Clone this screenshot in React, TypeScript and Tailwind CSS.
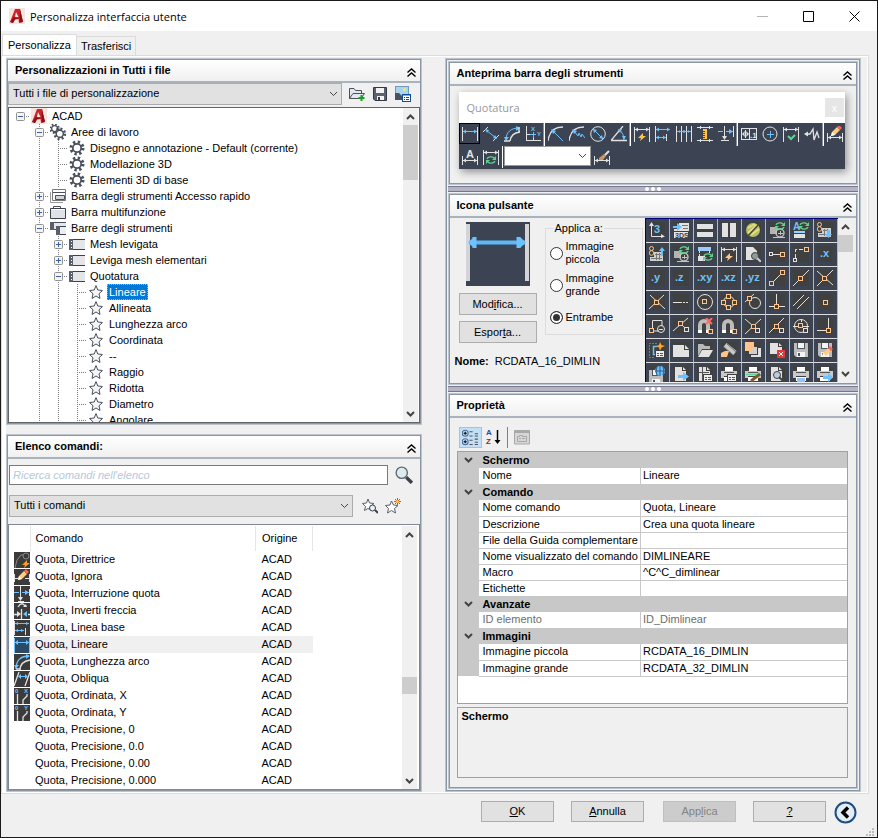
import { ReactNode, useState } from "react";

const W = "#e2e2e2";
const B = "#6cc2ff";
const O = "#ffc48c";
const G = "#5fd38d";
const D = "#3d4654";

/* ---------- drawing helpers, all on a 16x16 grid ---------- */

const Ico = ({ children, size = 16 }: { children: ReactNode; size?: number }) => (
  <svg
    width={size}
    height={size}
    viewBox="0 0 16 16"
    fill="none"
    className="block shrink-0"
    aria-hidden="true"
  >
    {children}
  </svg>
);

const L = ({ d, c = W, w = 1, dash }: { d: string; c?: string; w?: number; dash?: string }) => (
  <path d={d} stroke={c} strokeWidth={w} strokeDasharray={dash} />
);
const F = ({ d, c = W }: { d: string; c?: string }) => <path d={d} fill={c} />;
const C = ({ x, y, r, c = W, w = 1 }: { x: number; y: number; r: number; c?: string; w?: number }) => (
  <circle cx={x} cy={y} r={r} stroke={c} strokeWidth={w} />
);
const Sq = ({ x, y, c = O }: { x: number; y: number; c?: string }) => (
  <rect x={x - 1.5} y={y - 1.5} width="4" height="4" stroke={c} strokeWidth="1" fill="#404040" />
);
const T = ({ x, y, s = 11, c = B, children }: { x: number; y: number; s?: number; c?: string; children: string }) => (
  <text x={x} y={y} fontSize={s} fontWeight="bold" fill={c} fontFamily="Liberation Sans, sans-serif">
    {children}
  </text>
);
const Flash = ({ x, y, c = "#ffc552" }: { x: number; y: number; c?: string }) => (
  <F c={c} d={`M${x + 1} ${y - 4}L${x - 4} ${y + 1}H${x - 1}L${x - 2} ${y + 4}L${x + 4} ${y - 1}H${x + 1}Z`} />
);
const Refresh = ({ x, y }: { x: number; y: number }) => (
  <g transform={`translate(${x} ${y})`}>
    <L c={G} w={1.4} d="M-4 -1A4 3 0 0 1 3 -2M4 1A4 3 0 0 1 -3 2" />
    <F c={G} d="M5 -4V0H1ZM-5 4V0H-1Z" />
  </g>
);
const Pencil = ({ x, y }: { x: number; y: number }) => (
  <g transform={`translate(${x} ${y})`}>
    <F c="#ffcc80" d="M-4 1L1 -4L4 -1L-1 4L-5 5Z" />
    <F c="#ff6058" d="M1 -4L3 -6L6 -3L4 -1Z" />
    <F c="#fff" d="M-4 1L-5 5L-1 4Z" />
  </g>
);
const Page = () => <F d="M2 1H9V5H13V15H2ZM10 1L13 4H10Z" />;
const Disk = () => (
  <>
    <path d="M1 1H15V15H3L1 13Z" fill="#bdbdbd" />
    <F c="#4c5563" d="M4 1H12V7H4Z" />
    <F c="#f4f4f4" d="M5 1H11V6H5ZM4 10H12V15H4Z" />
    <F c="#4c5563" d="M5 11H7V14H5Z" />
  </>
);
const Printer = () => (
  <>
    <F c="#fff" d="M4 1H12V5H4ZM3 11H13V15H3Z" />
    <F c="#c8c8c8" d="M0 5H16V12H13V10H3V12H0Z" />
    <F c="#555" d="M3 6H13V7H3Z" />
  </>
);
const ListBadge = () => (
  <>
    <rect x="6.5" y="8.5" width="9" height="7" fill="#eee" stroke="#404040" />
    <L c="#555" d="M8 11.5H10M11 11.5H14M8 13.5H10M11 13.5H14" />
  </>
);
const DimFrame = () => (
  <>
    <L d="M0.5 1V16M15.5 1V16M1 3.5H15" />
    <F d="M1 3.5L4 1.5V5.5ZM15 3.5L12 1.5V5.5Z" />
  </>
);
const DimBase = () => (
  <>
    <L d="M0.5 7V16M15.5 7V16M1 11.5H15" />
    <F d="M1 11.5L4 9.5V13.5ZM15 11.5L12 9.5V13.5Z" />
  </>
);
const Magnet = () => (
  <>
    <L c="#bdbdbd" w={4} d="M3 12V7A4 4 0 0 1 11 7V12" />
    <F c="#fff" d="M1 12H5V15H1ZM9 12H13V15H9Z" />
  </>
);
const Db = () => (
  <>
    <F c="#d0d0d0" d="M5 6H14V15H1V11H5Z" />
    <L c="#777" d="M6 8.5H13M2 12.5H13M7.5 7V14M10.5 7V14" />
    <C x={2.5} y={2.5} r={2} c={O} />
    <C x={2.5} y={7} r={2.3} c={O} />
  </>
);
const Shapes = () => (
  <>
    <F c="#b4b4b4" d="M1 5H8V12H1Z" />
    <C x={11} y={11} r={4} c="#c4c4c4" w={1.4} />
    <L c="#c4c4c4" d="M4 15.5H16M11.5 9V13M9 11.5H14" />
  </>
);

const LinearDim = () => (
  <Ico>
    <L d="M0.5 1V15M15.5 1V15" />
    <L c={B} d="M1 5.5H15" />
    <F c={B} d="M1 5.5L4 3.5V7.5ZM15 5.5L12 3.5V7.5Z" />
  </Ico>
);

/* ---------- dimension toolbar ---------- */

type Tool = { name: string; icon: ReactNode };

const toolGroups: Tool[][] = [
  [
    { name: "Lineare", icon: <LinearDim /> },
    { name: "Allineata", icon: <Ico><L d="M0 6L5 1M10 15L16 9" /><L c={B} d="M3 4L13 12" /><F c={B} d="M2 3L6 4L4 7ZM14 13L10 12L12 9Z" /></Ico> },
    { name: "Lunghezza arco", icon: <Ico><L c={B} d="M2 14C2 6 7 2 15 2" /><F c={B} d="M0 11H5L2 15ZM12 0V5L16 2Z" /><L w={1.4} d="M6 15C7 9 10 7 16 6M0 15H6M15 1V6" /></Ico> },
    { name: "Coordinata", icon: <Ico><L d="M1.5 0V15M1 14.5H16M8.5 6V14M2 8.5H5" /><L c={B} d="M5 8.5H11M8.5 6V12" /><T x={6} y={5} s={6}>X</T><T x={12} y={10} s={6}>Y</T></Ico> },
  ],
  [
    { name: "Raggio", icon: <Ico><L d="M0 15C1 6 6 1 15 1" w={1.3} /><L c={B} d="M4 4L15 15" /><F c={B} d="M3 3L8 5L5 8Z" /></Ico> },
    { name: "Ridotta", icon: <Ico><L d="M0 15C1 6 6 1 15 1" w={1.3} /><L c={B} d="M5 5L9 10L10 7L12 11L13 8L16 12" /><F c={B} d="M3 3L8 5L5 8Z" /></Ico> },
    { name: "Diametro", icon: <Ico><C x={8} y={8} r={7.3} /><L c={B} d="M3 3L13 13" /><F c={B} d="M3 3L7 4L4 7ZM13 13L9 12L12 9Z" /></Ico> },
    { name: "Angolare", icon: <Ico><L d="M12 0L0 14.5H16" w={1.3} /><L c={B} d="M9 4Q13 8 13 14" /><F c={B} d="M7 3L11 3L9 7ZM11 10H15L13 14Z" /></Ico> },
  ],
  [
    { name: "Quota rapida", icon: <Ico><DimFrame /><Flash x={8} y={11} /></Ico> },
    { name: "Linea base", icon: <Ico><L d="M0.5 0V16M11.5 8V15" /><L c={B} d="M1 3.5H15M1 11.5H11" /><F c={B} d="M1 3.5L4 1.5V5.5ZM15 3.5L12 1.5V5.5ZM1 11.5L4 9.5V13.5ZM11 11.5L8 9.5V13.5Z" /></Ico> },
    { name: "Continua", icon: <Ico><L d="M0.5 0V16M5.5 0V16M10.5 0V16M15.5 0V16" /><L c={B} d="M1 5.5H15" /><F c={B} d="M3 4L5 5.5L3 7ZM8 4L6 5.5L8 7ZM8 4L10 5.5L8 7ZM13 4L11 5.5L13 7Z" /></Ico> },
    { name: "Spazio quota", icon: <Ico><L d="M0 1.5H16M0 14.5H16M3.5 0V3M12.5 0V3M3.5 13V16M12.5 13V16" /><F c="#ffc552" d="M6 3H10V13H6Z" /><L c={D} d="M6 5.5H8M6 7.5H8M6 9.5H8M6 11.5H8" /></Ico> },
    { name: "Interruzione quota", icon: <Ico><L d="M15.5 0V11M6.5 0V13M3 14.5H11" /><L c={B} d="M0 5.5H5M8 5.5H15" /><F c={B} d="M11 3L15 5.5L11 8Z" /><F d="M4 10H9L6.5 14Z" /></Ico> },
  ],
  [
    { name: "Tolleranza", icon: <Ico><rect x="0.5" y="2.5" width="15" height="11" stroke={W} /><L d="M8.5 3V13M1 8H8M4.5 4V12" /><C x={4.5} y={8} r={2.2} /><T x={9} y={12} s={8} c={W}>.1</T></Ico> },
    { name: "Centro", icon: <Ico><C x={8} y={8} r={7} /><L c={B} d="M8.5 5V12M5 8.5H12" /></Ico> },
    { name: "Ispezione", icon: <Ico><DimFrame /><L c={G} w={2} d="M5 10L8 13L12 9" /></Ico> },
    { name: "Lineare ridotta", icon: <Ico><L w={1.3} d="M1 8H6L9 3L10 14L13 6L15 12" /><F d="M0 8L4 5.5V10.5Z" /></Ico> },
  ],
  [{ name: "Modifica quota", icon: <Ico><DimBase /><Pencil x={9} y={5} /></Ico> }],
];

const ToolButton = ({ tool, active = false }: { tool: Tool; active?: boolean }) => (
  <button
    aria-label={tool.name}
    className={`flex size-[21px] shrink-0 items-start justify-start pt-[3px] pl-[3px] ${
      active ? "shadow-[inset_0_0_0_1px_#000]" : ""
    }`}
  >
    {tool.icon}
  </button>
);

/* ---------- icon palette ---------- */

const palette: ReactNode[] = [
  <><L d="M2.5 2V14.5H14" /><F d="M0 4H5L2.5 0ZM12 12V16L16 14.5Z" /><T x={5} y={11}>3</T></>,
  <><F d="M6 1H16V9H1V7H6Z" /><L c="#777" d="M9 3.5H15M10 6.5H15" /><F c={B} d="M0 4H4V1L9 5L4 9V6H0Z" /><F c="#e8e8e8" d="M1 10H15V16H1Z" /><T x={2} y={16} s={7} c="#404040">3DS</T></>,
  <><F d="M0 2H16V7H0ZM0 10H16V15H0Z" /></>,
  <><F d="M1 1H7V15H1ZM9 1H15V15H9Z" /></>,
  <><circle cx="8" cy="8" r="7" fill="#b9bd66" /><L c="#e5df83" w={2} d="M3 6L10 2M3 11L12 3M6 13L14 7" /><L c="#454a40" w={1.5} d="M2 15L15 1" /></>,
  <><Shapes /><Refresh x={11} y={4} /></>,
  <><T x={0} y={8} s={10}>A</T><Refresh x={11} y={4} /><F c="#9bd0ff" d="M1 9H12V11H1Z" /><F d="M1 12H12V16H1Z" /></>,
  <><Db /><F c={B} d="M10 8H13V12H15L11.5 16L8 12H10Z" /></>,
  <><Db /><F c={B} d="M12 10H14V5H16L13 1L10 5H12Z" /></>,
  <><Shapes /><Refresh x={11} y={4} /></>,
  <><F c="#9bcbff" d="M1 1H14V5H1Z" /><L dash="2 1" d="M2.5 5V10M12.5 5V8" /><F d="M1 10H8V15H1Z" /><Refresh x={11} y={11} /></>,
  <><DimFrame /><Flash x={8} y={11} c={O} /></>,
  <><F d="M1 1H8L12 5V14H1Z" /><circle cx="10" cy="10" r="3.5" fill="#8f9a9e" stroke="#404040" /><L w={2} c="#ccc" d="M12 12L16 16" /></>,
  <><L d="M2 8.5H12" /><rect x="0.5" y="6.5" width="3" height="3" stroke={W} fill="#404040" /><Sq x={13} y={8} /></>,
  <><L dash="4 2" d="M2.5 12V3.5H11" /><rect x="0.5" y="12.5" width="3" height="3" stroke={W} /><Sq x={13} y={3} /></>,
  <><T x={3} y={11}>.x</T></>,
  <><T x={2} y={11}>.y</T></>,
  <><T x={2} y={11}>.z</T></>,
  <><T x={0} y={11}>.xy</T></>,
  <><T x={0} y={11}>.xz</T></>,
  <><T x={0} y={11}>.yz</T></>,
  <><L d="M3 13L13 3" /><Sq x={2} y={13} /><Sq x={13} y={2} /></>,
  <><L d="M0 16L16 0" /><Sq x={7} y={8} /></>,
  <><L d="M0 16L16 0M0 1L16 15" /><Sq x={7} y={8} /></>,
  <><L d="M0 15L15 1M1 1L16 15" /><Sq x={7} y={8} /></>,
  <><L d="M0 8.5H7" /><L dash="2 1" d="M7 8.5H16" /></>,
  <><C x={8} y={8} r={7.5} /><Sq x={7} y={7} /></>,
  <><C x={8} y={8} r={5.5} /><Sq x={7} y={2} /><Sq x={7} y={13} /><Sq x={2} y={8} /><Sq x={13} y={8} /></>,
  <><C x={10} y={9} r={5.5} /><L d="M0 8L9 0" /><Sq x={4} y={4} /></>,
  <><L d="M7.5 0V11M0 12.5H16" /><Sq x={7} y={12} /></>,
  <><L d="M0 12L11 1M4 15L16 3" /></>,
  <><Sq x={8} y={8} /></>,
  <><L d="M3.5 12V2.5H13V8M5 13H10" /><C x={12} y={11} r={3.5} /><L d="M10 11.5H14" /><Sq x={2} y={12} /></>,
  <><L d="M0 13L8 6L15 0M9 7L12 10" /><Sq x={7} y={5} /><Sq x={13} y={11} c={W} /></>,
  <><Magnet /><L c="#ff6b6b" w={2} d="M9 0L15 6M15 0L9 6" /><Sq x={13} y={13} /></>,
  <><Magnet /><Sq x={13} y={13} /></>,
  <><L d="M0 1L14 13M0 16L16 1" /><Sq x={8} y={8} /><Sq x={12} y={12} c={W} /></>,
  <><L d="M0 15L15 0M9 9L12 12" /><Sq x={7} y={8} /><Sq x={12} y={12} c={W} /></>,
  <><C x={8} y={8} r={6.5} /><L d="M0 8.5H16M8.5 1V4" /><Sq x={7} y={7} /><Sq x={12} y={12} c={W} /></>,
  <><L d="M11.5 0V10M0 12.5H10" /><Sq x={11} y={12} /></>,
  <><L c="#e05050" dash="2 1" d="M8 1.5H0.5V15.5H6" /><L c={B} d="M8 4.5H4.5V12.5H7" w={1.5} /><F c="#ffa726" d="M11 0L12.5 3L16 4L12.5 5.5L11 9L10 5.5L7 4L10 3Z" /><ListBadge /></>,
  <><F d="M0 3H11V8H16V15H0ZM12 3L16 7H12Z" /></>,
  <><F c="#b8b8b8" d="M1 2H6L8 4H13V7H5L1 14Z" /><F d="M5 8H16L12 15H1Z" /></>,
  <><L c="#c8c8c8" w={5} d="M4 3L14 11" /><L w={1} c="#777" d="M6 2L15 10M3 5L12 13" /><F c={O} d="M0 11L4 9H8L6 15H0Z" /></>,
  <><F d="M6 6H16V15H6Z" /><F c="#404040" d="M3 4H13V13H3Z" /><F c="#d0d0d0" d="M4 5H12V12H4Z" /><F c={O} d="M0 0H9V6L6 9H0Z" /></>,
  <><F d="M1 1H9V5H13V12H1ZM10 1L13 4H10Z" /><F c="#e53935" d="M8 8H16V16H8Z" /><L c="#fff" d="M10 10L14 14M14 10L10 14" /></>,
  <Disk />,
  <><Disk /><Pencil x={10} y={10} /></>,
  <><g transform="translate(-1 3)"><Disk /></g><circle cx="11" cy="5" r="5" fill={B} /><L c="#2b5c86" d="M6 5H16M11 0V10M8 1Q6 5 8 9M14 1Q16 5 14 9" /></>,
  <><Page /><F c={B} d="M5 9H10V6L16 10.5L10 15V12H5Z" /></>,
  <><Page /><L c="#555" d="M2 6.5H12M5.5 1V15" /><ListBadge /></>,
  <><Printer /><ListBadge /></>,
  <><Printer /><L c="#7a5a30" w={3} d="M6 15L15 8" /><L c={G} d="M1 8.5H12" /></>,
  <><Page /><circle cx="8" cy="9" r="3.5" fill="#bcd" stroke="#404040" /><L c="#404040" w={2} d="M10 11L14 15" /></>,
  <><Printer /><F c="#8fc4ff" d="M4 12H12V16H4Z" /></>,
  <><Printer /><F c={B} d="M6 10H11V7L16 11.5L11 16V13H6Z" /></>,
];

/* ---------- tree ---------- */

type Guide = "none" | "line" | "tee" | "plus" | "minus";
type TreeIcon = "logo" | "gears" | "gear" | "quick" | "ribbon" | "bars" | "bar" | "star";
type TreeRow = { guides: Guide[]; icon: TreeIcon; label: string };

const sub: Guide[] = ["none", "line", "line", "tee"];
const treeRows: TreeRow[] = [
  { guides: ["minus"], icon: "logo", label: "ACAD" },
  { guides: ["none", "minus"], icon: "gears", label: "Aree di lavoro" },
  { guides: ["none", "line", "tee"], icon: "gear", label: "Disegno e annotazione - Default (corrente)" },
  { guides: ["none", "line", "tee"], icon: "gear", label: "Modellazione 3D" },
  { guides: ["none", "line", "tee"], icon: "gear", label: "Elementi 3D di base" },
  { guides: ["none", "plus"], icon: "quick", label: "Barra degli strumenti Accesso rapido" },
  { guides: ["none", "plus"], icon: "ribbon", label: "Barra multifunzione" },
  { guides: ["none", "minus"], icon: "bars", label: "Barre degli strumenti" },
  { guides: ["none", "line", "plus"], icon: "bar", label: "Mesh levigata" },
  { guides: ["none", "line", "plus"], icon: "bar", label: "Leviga mesh elementari" },
  { guides: ["none", "line", "minus"], icon: "bar", label: "Quotatura" },
  { guides: sub, icon: "star", label: "Lineare" },
  { guides: sub, icon: "star", label: "Allineata" },
  { guides: sub, icon: "star", label: "Lunghezza arco" },
  { guides: sub, icon: "star", label: "Coordinata" },
  { guides: sub, icon: "star", label: "--" },
  { guides: sub, icon: "star", label: "Raggio" },
  { guides: sub, icon: "star", label: "Ridotta" },
  { guides: sub, icon: "star", label: "Diametro" },
  { guides: sub, icon: "star", label: "Angolare" },
];

const GuideCell = ({ kind, first }: { kind: Guide; first: boolean }) => (
  <svg width="19" height="16" viewBox="0 0 19 16" fill="none" className="block shrink-0" aria-hidden="true">
    {kind !== "none" && !first && <path d="M9.5 0V16" stroke="#808080" strokeDasharray="1 1" />}
    {kind !== "none" && kind !== "line" && <path d="M9 8.5H19" stroke="#808080" strokeDasharray="1 1" />}
    {(kind === "plus" || kind === "minus") && (
      <>
        <rect x="5.5" y="4.5" width="8" height="8" rx="1" fill="#f4f4f4" stroke="#919191" />
        <path d={kind === "plus" ? "M7 8.5H12M9.5 6V11" : "M7 8.5H12"} stroke="#3b5fa8" />
      </>
    )}
  </svg>
);

const AcadLogo = () => (
  <Ico>
    <rect width="16" height="16" fill="#f6e4e0" />
    <path d="M6 1H11L14 14L10 15L9.5 11H6L4 15L1 14Z" fill="#c9252c" />
    <path d="M7 4L9.5 9H6Z" fill="#f6e4e0" />
    <path d="M1 14L5 9L10 11L6 11.5L4 15ZM11 1L14 14L10.5 14.5Z" fill="#8d1016" />
  </Ico>
);

const GearShape = () => (
  <>
    <circle cx="8" cy="8" r="6" stroke="#4a505c" strokeWidth="3" strokeDasharray="2.3 2.412" />
    <circle cx="8" cy="8" r="4.2" stroke="#4a505c" strokeWidth="1.8" fill="#fff" />
  </>
);
const starPath = "M8 1.5L9.8 6L14.5 6.5L11 9.8L12 14.5L8 12L4 14.5L5 9.8L1.5 6.5L6.2 6Z";

const treeIcons: Record<TreeIcon, ReactNode> = {
  logo: <AcadLogo />,
  gears: (
    <Ico>
      <g transform="translate(-1 -1) scale(0.7)"><GearShape /></g>
      <g transform="translate(3 3) scale(0.85)"><GearShape /></g>
    </Ico>
  ),
  gear: <Ico><GearShape /></Ico>,
  quick: (
    <Ico>
      <path d="M2.5 1.5H15.5V12.5H2.5Z" fill="#fff" stroke="#777" />
      <path d="M0.5 4V14.5H13" stroke="#999" />
      <path d="M3 4.5H15" stroke="#4a505c" />
      <path d="M5.5 7.5H14.5V11.5H5.5Z" fill="#d0d3d8" stroke="#4a505c" />
    </Ico>
  ),
  ribbon: (
    <Ico>
      <path d="M3.5 4.5V2.5H10.5V4.5" stroke="#4a505c" />
      <path d="M0.5 4.5H15.5V14.5H0.5Z" fill="#dfe2e6" stroke="#3c424d" />
      <path d="M1 5.5H15" stroke="#fff" />
    </Ico>
  ),
  bars: (
    <Ico>
      <path d="M0 2H16V10H0Z" fill="#e6e7ea" />
      <path d="M0 2.5H16M0 9.5H6" stroke="#4a505c" />
      <path d="M0 2H4V10H0Z" fill="#5a606b" />
      <path d="M6 6H16V15H6Z" fill="#eceef0" />
      <path d="M6 6.5H16M6 14.5H16" stroke="#3c424d" />
      <path d="M6 6H10V15H6Z" fill="#5a606b" />
    </Ico>
  ),
  bar: (
    <Ico>
      <path d="M1 3H16V13H1Z" fill="#e3e5e8" />
      <path d="M0 3.5H16M0 13.5H16" stroke="#3c424d" />
      <path d="M0 3H4V14H0Z" fill="#5a606b" />
      <path d="M2.5 5V13" stroke="#fff" strokeDasharray="1 2" />
    </Ico>
  ),
  star: <Ico><path d={starPath} fill="#f4f5f7" stroke="#4a505c" /></Ico>,
};

/* ---------- command list ---------- */

const commands: { name: string; icon?: ReactNode }[] = [
  { name: "Quota, Direttrice", icon: <><L c="#888" d="M1 16L3 8L7 3H9" /><C x={12} y={4} r={3} c="#888" /><Flash x={12} y={12} c="#ff9d1e" /></> },
  { name: "Quota, Ignora", icon: <><L d="M0 9.5H5M11 9.5H16M0.5 5V13M15.5 5V13" /><Pencil x={9} y={6} /></> },
  { name: "Quota, Interruzione quota", icon: <><L d="M6.5 0V12M4 15.5H10M15.5 3V10" /><L c={B} d="M0 6.5H5M8 6.5H15" /><F c={B} d="M11 4L15 6.5L11 9Z" /><F d="M4 11H9L6.5 15Z" /></> },
  { name: "Quota, Inverti freccia", icon: <><L d="M4 4Q8 -2 11 3M7.5 6V16M0 11.5H3M14 11.5H16" w={1.3} /><F d="M9 4H13L12 1ZM3 8L7 11L3 14Z" /><F c={B} d="M13 8L9 11L13 14Z" /></> },
  { name: "Quota, Linea base", icon: <><L c={B} d="M1 3.5H15M1 10.5H10" /><F c={B} d="M1 3.5L4 2V5ZM15 3.5L12 2V5ZM1 10.5L4 9V12ZM10 10.5L7 9V12Z" /><L d="M0.5 1V15M11.5 8V15" /></> },
  { name: "Quota, Lineare", icon: <><rect width="16" height="16" fill="#2b4a66" /><L c={B} d="M1 5.5H15M0.5 1V16M15.5 1V16" /><F c={B} d="M1 5.5L4 3V8ZM15 5.5L12 3V8Z" /></> },
  { name: "Quota, Lunghezza arco", icon: <><L c={B} w={1.3} d="M2 15C2 6 7 2 15 2" /><F c={B} d="M0 11H5L2 15ZM12 0V5L16 2Z" /><L w={1.5} d="M6 16C6 10 10 7 16 6M2 15H6" /></> },
  { name: "Quota, Obliqua", icon: <><L w={1.3} d="M0 15L5 1M11 15L16 1" /><L c={B} d="M5 5.5H13" /><F c={B} d="M4 5.5L7 3V8ZM14 5.5L11 3V8Z" /></> },
  { name: "Quota, Ordinata, X", icon: <><T x={1} y={5} s={6}>0</T><T x={10} y={5} s={6}>X</T><L w={1.3} d="M3.5 6V16M13 6V8L9 12V16" /></> },
  { name: "Quota, Ordinata, Y", icon: <><T x={1} y={5} s={6}>0</T><T x={10} y={5} s={6}>Y</T><L w={1.3} d="M3.5 6V16M13 6V8L9 12V16" /></> },
  { name: "Quota, Precisione, 0" },
  { name: "Quota, Precisione, 0.0" },
  { name: "Quota, Precisione, 0.00" },
  { name: "Quota, Precisione, 0.000" },
];

const properties = [
  { title: "Schermo", rows: [["Nome", "Lineare"]] },
  {
    title: "Comando",
    rows: [
      ["Nome comando", "Quota, Lineare"],
      ["Descrizione", "Crea una quota lineare"],
      ["File della Guida complementare", ""],
      ["Nome visualizzato del comando", "DIMLINEARE"],
      ["Macro", "^C^C_dimlinear"],
      ["Etichette", ""],
    ],
  },
  { title: "Avanzate", rows: [["ID elemento", "ID_Dimlinear"]], disabled: true },
  {
    title: "Immagini",
    rows: [
      ["Immagine piccola", "RCDATA_16_DIMLIN"],
      ["Immagine grande", "RCDATA_32_DIMLIN"],
    ],
  },
];

/* ---------- shared widgets ---------- */

const Chevron = ({ up = false, w = 1 }: { up?: boolean; w?: number }) => (
  <svg width="9" height="6" viewBox="0 0 9 6" fill="none" className="block" aria-hidden="true">
    <path d={up ? "M1 5L4.5 1.5L8 5" : "M1 1L4.5 4.5L8 1"} stroke="#444" strokeWidth={w} />
  </svg>
);

const Panel = ({ title, className = "", children }: { title: string; className?: string; children: ReactNode }) => (
  <section className={`flex flex-col border border-[#bcc5ce] ${className}`}>
    <div className="flex min-h-0 flex-1 flex-col border border-[#8b97a5]">
      <header className="flex h-[23px] shrink-0 items-center justify-between border-b-2 border-[#a9b3be] bg-linear-to-b from-white to-[#f0f0f0] pr-1 pl-[7px]">
        <h2 className="text-[11px] font-bold">{title}</h2>
        <button aria-label={`Comprimi ${title}`} className="pt-1">
          <svg width="9" height="9" viewBox="0 0 9 9" fill="none" aria-hidden="true">
            <path d="M0.5 4.5L4.5 1L8.5 4.5M0.5 8.5L4.5 5L8.5 8.5" stroke="#000" strokeWidth="1.4" />
          </svg>
        </button>
      </header>
      {children}
    </div>
  </section>
);

const Scrollbar = ({ thumb }: { thumb: string }) => (
  <div className="flex w-[15px] shrink-0 flex-col bg-[#f0f0f0]">
    <button aria-label="Scorri su" className="flex h-[17px] items-center justify-center">
      <Chevron up w={2} />
    </button>
    <div className="min-h-0 flex-1">
      <div className={`bg-[#cdcdcd] ${thumb}`} />
    </div>
    <button aria-label="Scorri giù" className="flex h-[17px] items-center justify-center">
      <Chevron w={2} />
    </button>
  </div>
);

const Combo = ({ label, value, className = "" }: { label: string; value: string; className?: string }) => (
  <div className={`relative ${className}`}>
    <select aria-label={label} className="h-[22px] w-full appearance-none border border-[#acacac] bg-[#e1e1e1] px-1 pb-[2px]">
      <option>{value}</option>
    </select>
    <span className="pointer-events-none absolute top-2 right-1">
      <Chevron />
    </span>
  </div>
);

const Splitter = () => (
  <div className="flex h-[6px] shrink-0 items-center justify-center gap-[2px] border-y border-[#77778a] bg-[#b4b4c6]">
    <i className="size-1 rounded-full bg-white" />
    <i className="size-1 rounded-full bg-white" />
    <i className="size-1 rounded-full bg-white" />
  </div>
);

const pushButton = "border border-[#adadad] bg-[#e1e1e1] text-center";

/* ---------- panels ---------- */

const CustomizationPanel = () => {
  const [selected, setSelected] = useState("Lineare");

  return (
    <Panel title="Personalizzazioni in Tutti i file" className="min-h-0 flex-1">
      <div className="flex h-6 shrink-0 items-start">
        <Combo label="File di personalizzazione" value="Tutti i file di personalizzazione" className="flex-1" />
        <div className="flex w-[78px] items-center gap-[7px] pt-[3px] pl-[7px]">
          <button aria-label="Carica file">
            <Ico>
              <path d="M0.5 12.5V2.5H5L6.5 4.5H12.5V7M0.5 12.5L4 7.5H15.5L12 12.5Z" fill="#e3e8ee" stroke="#4a505c" />
              <path d="M12.5 9V15M9.5 12H15.5" stroke="#16a016" strokeWidth="2" />
            </Ico>
          </button>
          <button aria-label="Salva">
            <Ico>
              <path d="M1.5 1.5H14.5V14.5H3L1.5 13Z" fill="#5a6270" stroke="#343a45" />
              <path d="M4 2H12V7H4ZM5 10H12V14H5Z" fill="#f2f2f2" />
              <path d="M6 11H8V14H6Z" fill="#343a45" />
            </Ico>
          </button>
          <button aria-label="Immagini">
            <Ico>
              <rect x="0.5" y="0.5" width="13" height="12" fill="#a9d4ee" stroke="#6e9cba" />
              <path d="M0 14V7L4 7L7 10V14Z" fill="#4a505c" />
              <circle cx="9.5" cy="3.5" r="1.5" fill="#ffe27a" />
              <rect x="7.5" y="8.5" width="8" height="7" fill="#fff" stroke="#0b5196" />
              <path d="M9 11.5H10M11 11.5H14M9 13.5H10M11 13.5H14M8 9H15" stroke="#0b5196" />
            </Ico>
          </button>
        </div>
      </div>
      <div className="flex min-h-0 flex-1 border border-[#646464] bg-white pr-[1px]">
        <ul className="min-w-0 flex-1 overflow-hidden pl-[2px]">
          {treeRows.map((row) => (
            <li key={row.label} className="flex h-4 items-center whitespace-nowrap">
              {row.guides.map((guide, i) => (
                <GuideCell key={i} kind={guide} first={row.icon === "logo"} />
              ))}
              <span className="flex w-5 shrink-0 items-center pl-[1px]">{treeIcons[row.icon]}</span>
              <button
                onClick={() => setSelected(row.label)}
                className={`h-4 border px-[1px] leading-[14px] ${
                  selected === row.label ? "border-dotted border-[#ff9a3c] bg-[#0078d7] text-white" : "border-transparent"
                }`}
              >
                {row.label}
              </button>
            </li>
          ))}
        </ul>
        <Scrollbar thumb="h-[55px]" />
      </div>
    </Panel>
  );
};

const CommandPanel = () => (
  <Panel title="Elenco comandi:">
    <div className="flex items-center gap-[7px] px-[1px] pt-[6px] pr-[7px]">
      <input
        aria-label="Ricerca comandi"
        placeholder="Ricerca comandi nell'elenco"
        className="h-5 min-w-0 flex-1 border border-[#7a7a7a] bg-white px-[3px] italic placeholder:text-[#b5c8da]"
      />
      <button aria-label="Cerca">
        <Ico size={18}>
          <circle cx="6" cy="6" r="5" fill="#dcebee" stroke="#5c6570" strokeWidth="1.2" />
          <path d="M10 10L15 15" stroke="#3c424d" strokeWidth="3" />
        </Ico>
      </button>
    </div>
    <div className="flex items-center px-[1px] pt-[10px] pb-[7px]">
      <Combo label="Categoria comandi" value="Tutti i comandi" className="flex-1" />
      <div className="flex w-[66px] gap-[7px] pl-[9px]">
        <button aria-label="Trova comando">
          <Ico>
            <path d="M6 1L7.5 5L12 5.5L8.5 8.5L9.5 12.5L6 10.5L2.5 12.5L3.5 8.5L0.5 5.5L4.5 5Z" fill="#fff" stroke="#5a606b" />
            <circle cx="10.5" cy="10" r="3" fill="#e8f0f4" stroke="#3c424d" />
            <path d="M13 12L16 15" stroke="#3c424d" strokeWidth="2" />
          </Ico>
        </button>
        <button aria-label="Nuovo comando">
          <Ico>
            <path d="M6.5 3L8.5 7L13 7.5L9.5 10.5L10.5 15L6.5 12.5L2.5 15L3.5 10.5L0.5 7.5L5 7Z" fill="#fff" stroke="#5a606b" />
            <path d="M12.5 0V7M9 3.5H16M10 1L15 6M15 1L10 6" stroke="#e8481c" />
            <circle cx="12.5" cy="3.5" r="1.5" fill="#ffd23e" />
          </Ico>
        </button>
      </div>
    </div>
    <div className="flex border border-[#7f8894] bg-white pt-[1px] pr-[2px] pl-[1px]">
      <div className="min-w-0 flex-1 overflow-hidden">
        <table className="w-[303px] table-fixed border-collapse text-left">
          <thead>
            <tr className="h-[25px]">
              <th className="w-[20px] border-r border-[#e5e5e5]" aria-label="Icona" />
              <th className="border-r border-[#e5e5e5] pl-[5px] font-normal">Comando</th>
              <th className="w-[57px] border-r border-[#e5e5e5] pl-[6px] font-normal">Origine</th>
            </tr>
          </thead>
          <tbody>
            {commands.map((command) => (
              <tr key={command.name} className="h-[17px]">
                <td className="p-0 pl-1">
                  {command.icon && (
                    <div className="size-4 bg-[#3b3b3b]">
                      <Ico>{command.icon}</Ico>
                    </div>
                  )}
                </td>
                <td className={`p-0 pl-[5px] ${command.name === "Quota, Lineare" ? "bg-[#f0f0f0]" : ""}`}>{command.name}</td>
                <td className={`p-0 pl-[6px] ${command.name === "Quota, Lineare" ? "bg-[#f0f0f0]" : ""}`}>ACAD</td>
              </tr>
            ))}
          </tbody>
        </table>
      </div>
      <Scrollbar thumb="mt-[134px] h-[17px]" />
    </div>
  </Panel>
);

const ToolbarPreview = () => (
  <Panel title="Anteprima barra degli strumenti">
    <div className="pt-[6px] pr-[11px] pb-[14px] pl-[9px]">
      <div className="shadow-[2px_3px_8px_rgba(0,0,0,0.4)]">
        <div className="flex h-[31px] items-center justify-between bg-white pr-[1px] pl-2 font-['Open_Sans','Noto_Sans',sans-serif] text-[11px] text-[#999]">
          <span>Quotatura</span>
          <button aria-label="Chiudi barra" className="size-[19px] bg-[#e6e6e6] text-[11px] text-white">
            x
          </button>
        </div>
        <div className="bg-[#3c4454] pb-[1px]">
          <div className="flex h-[23px]">
            {toolGroups.map((group, i) => (
              <div key={i} className="flex">
                {i > 0 && <span className="w-[2px] border-r border-white bg-[#8a8f99]" />}
                {group.map((tool) => (
                  <ToolButton key={tool.name} tool={tool} active={tool.name === "Lineare"} />
                ))}
              </div>
            ))}
          </div>
          <div className="flex h-[22px]">
            <ToolButton tool={{ name: "Modifica testo quota", icon: <Ico><DimBase /><F c={D} d="M4 0H12V10H4Z" /><T x={4} y={9} s={11} c={W}>A</T></Ico> }} />
            <ToolButton tool={{ name: "Aggiorna quota", icon: <Ico><DimFrame /><Refresh x={8} y={11} /></Ico> }} />
            <span className="ml-[1px] w-[1px] bg-white" />
            <div className="relative w-[88px] pl-[1px]">
              <select aria-label="Stile di quota" className="h-5 w-full appearance-none border border-[#999] bg-white" />
              <span className="pointer-events-none absolute top-[7px] right-1">
                <Chevron />
              </span>
            </div>
            <ToolButton tool={{ name: "Stile", icon: <Ico><DimBase /><F c="#c9985c" d="M5 9L10 5L12 7L9 11H5Z" /><L w={2} d="M11 6L15 2" /></Ico> }} />
          </div>
        </div>
      </div>
    </div>
  </Panel>
);

const ButtonImagePanel = () => {
  const [target, setTarget] = useState("Entrambe");

  return (
    <Panel title="Icona pulsante">
      <div className="flex pr-[3px] pb-[1px]">
        <div className="flex w-[95px] shrink-0 flex-col pt-1 pl-[5px]">
          <div className="ml-[11px] size-16 bg-[#3c4454]">
            <svg width="64" height="64" viewBox="0 0 64 64" fill="none" aria-hidden="true">
              <path d="M2 2V59M61 2V59" stroke="#d3d3d8" strokeWidth="4" />
              <path d="M3 20.5H59" stroke="#5db9f5" strokeWidth="4" />
              <path d="M2 20.5L8 15V26ZM60 20.5L54 15V26Z" fill="#6cc2ff" />
              <path d="M8.5 15V26M52.5 15V26" stroke="#6cc2ff" strokeWidth="4" />
            </svg>
          </div>
          <div className="flex flex-col gap-[6px] pt-[7px] pr-2 pl-1">
            <button className={`${pushButton} h-[22px]`}>
              Mod<u>i</u>fica...
            </button>
            <button className={`${pushButton} h-[22px]`}>
              Espor<u>t</u>a...
            </button>
          </div>
          <p className="pt-3 whitespace-nowrap">
            <b>Nome:</b>
            <span className="pl-[6px]">RCDATA_16_DIMLIN</span>
          </p>
        </div>
        <fieldset className="mt-1 h-[113px] min-w-0 flex-1 border border-[#dcdcdc] pt-[2px] pl-1 leading-[13px]">
          <legend className="ml-1 px-[1px]">Applica a:</legend>
          {["Immagine piccola", "Immagine grande", "Entrambe"].map((option) => (
            <label key={option} className="flex h-8 items-center gap-[3px]">
              <input
                type="radio"
                name="target"
                checked={target === option}
                onChange={() => setTarget(option)}
                className="size-[13px] shrink-0 appearance-none rounded-full border border-[#333] bg-white checked:bg-[#333] checked:shadow-[inset_0_0_0_2px_#fff]"
              />
              <span className="w-[60px]">{option}</span>
            </label>
          ))}
        </fieldset>
        <div className="ml-[2px] h-[164px] w-[193px] shrink-0 overflow-hidden border-t border-l border-[#00007a]">
          <div className="grid grid-cols-8">
            {palette.map((icon, i) => (
              <button
                key={i}
                aria-label={`Icona ${i + 1}`}
                className="flex size-6 items-start justify-start border-r border-b border-r-[#a8b8d8] border-b-[#dcdcdc] bg-[#3c4454] pt-[3px] pl-[3px]"
              >
                <span className="bg-[#404040]">
                  <Ico>{icon}</Ico>
                </span>
              </button>
            ))}
          </div>
        </div>
        <Scrollbar thumb="h-[17px]" />
      </div>
    </Panel>
  );
};

const PropertiesPanel = () => (
  <Panel title="Proprietà" className="min-h-0 flex-1">
    <div className="flex min-h-0 flex-1 flex-col pt-[9px] pr-2 pb-[9px] pl-[7px]">
      <div className="flex h-6 shrink-0 items-start pl-[2px]">
        <button aria-label="Per categoria" className="flex h-[21px] w-[23px] items-center justify-center border border-[#90c8f6] bg-[#c2dff6]">
          <Ico size={17}>
            <C x={3} y={4} r={2.8} c="#4a6a9a" />
            <C x={3} y={12} r={2.8} c="#4a6a9a" />
            <L c="#000" d="M1.5 4H4.5M3 2.5V5.5M1.5 12H4.5M3 10.5V13.5" />
            <L c="#555" d="M7 2.5H10M12 4.5H15M7 6.5H10M12 6.5H15M7 10.5H10M12 12.5H15M7 14.5H10M12 14.5H15M12 9.5H15" />
          </Ico>
        </button>
        <button aria-label="Ordine alfabetico" className="mt-[2px] ml-[3px]">
          <Ico>
            <T x={1} y={6} s={8} c="#1f4fb0">A</T>
            <T x={1} y={15} s={8} c="#a0202a">Z</T>
            <L c="#000" d="M12.5 1V13" w={1.5} />
            <F c="#000" d="M9.5 11H15.5L12.5 15Z" />
          </Ico>
        </button>
        <span className="mx-[6px] h-[21px] border-l border-[#808080]" />
        <button aria-label="Pagine delle proprietà" disabled className="mt-[2px]">
          <Ico>
            <path d="M0.5 1.5H15.5V15H0.5Z" fill="#d6d6d6" stroke="#a8a8a8" />
            <path d="M1 3H15" stroke="#a8a8a8" strokeWidth="2" />
            <path d="M3.5 7.5V12.5H12.5V7.5H8.5V6.5H5.5V7.5ZM5 9.5H7M8 9.5H11" stroke="#a8a8a8" />
          </Ico>
        </button>
      </div>
      <div className="min-h-0 flex-1 border border-[#a0a0a0] bg-white">
        <table className="w-full table-fixed border-collapse text-left">
          <colgroup>
            <col className="w-[21px]" />
            <col className="w-[162px]" />
            <col />
          </colgroup>
          {properties.map((section) => (
            <tbody key={section.title} className={section.disabled ? "text-[#6d6d6d]" : ""}>
              <tr className="h-4 bg-[#c8c8c8] leading-[15px] text-black">
                <td className="p-0">
                  <button aria-label={`Comprimi ${section.title}`} className="mx-auto block">
                    <Chevron w={2} />
                  </button>
                </td>
                <th colSpan={2} className="p-0 pl-1 font-bold">
                  {section.title}
                </th>
              </tr>
              {section.rows.map(([name, value]) => (
                <tr key={name} className="h-4 leading-[15px]">
                  <td className="bg-[#c8c8c8] p-0" />
                  <td className="overflow-hidden border-r border-b border-[#c8c8c8] p-0 pl-1 whitespace-nowrap">{name}</td>
                  <td className="border-b border-[#c8c8c8] p-0 pl-[2px]">{value}</td>
                </tr>
              ))}
            </tbody>
          ))}
        </table>
      </div>
      <div className="mt-[3px] h-[71px] shrink-0 border border-[#a0a0a0] px-1 pt-[2px] font-bold">Schermo</div>
    </div>
  </Panel>
);

const App = () => (
  <main className="flex h-screen flex-col border border-[#1a1a1a] bg-[#f0f0f0] font-['Liberation_Sans',Arial,sans-serif] text-[11px] leading-[13px] text-black">
    <header className="flex h-[30px] shrink-0 items-center bg-white pl-2 font-['Open_Sans','Noto_Sans',sans-serif]">
      <AcadLogo />
      <h1 className="flex-1 pl-[5px]">Personalizza interfaccia utente</h1>
      <div className="flex">
        <button aria-label="Riduci a icona" disabled className="flex h-7 w-[46px] items-center justify-center">
          <svg width="11" height="11" fill="none" stroke="#b5b5b5"><path d="M0 5.5H11" /></svg>
        </button>
        <button aria-label="Ingrandisci" className="flex h-7 w-[46px] items-center justify-center">
          <svg width="11" height="11" fill="none" stroke="#000"><path d="M0.5 0.5H10.5V10.5H0.5Z" /></svg>
        </button>
        <button aria-label="Chiudi" className="flex h-7 w-[46px] items-center justify-center">
          <svg width="11" height="11" fill="none" stroke="#000"><path d="M0.5 0.5L10.5 10.5M10.5 0.5L0.5 10.5" /></svg>
        </button>
      </div>
    </header>

    <nav className="flex shrink-0 items-end pt-[3px] pl-[1px]">
      <button className="h-[21px] border border-b-0 border-[#dcdcdc] bg-white px-[5px]">Personalizza</button>
      <button className="h-[19px] border border-b-0 border-l-0 border-[#dcdcdc] px-1">Trasferisci</button>
    </nav>

    <div className="mr-[8px] flex min-h-0 flex-1 border border-[#dcdcdc] bg-white pt-[1px] pr-[1px] pb-[1px] pl-1">
      <div className="flex min-w-0 flex-1 bg-[#f0f0f0] pt-[1px] pr-[6px]">
        <div className="flex min-w-0 flex-[416] flex-col gap-[9px]">
          <CustomizationPanel />
          <CommandPanel />
        </div>
        <div className="ml-[23px] flex min-w-0 flex-[415] flex-col border border-[#bcc5ce]">
          <div className="flex min-h-0 flex-1 flex-col gap-[1px] border border-[#8b97a5] p-[1px]">
            <ToolbarPreview />
            <Splitter />
            <ButtonImagePanel />
            <Splitter />
            <PropertiesPanel />
          </div>
        </div>
      </div>
    </div>

    <footer className="flex h-[43px] shrink-0 items-start justify-end pt-[7px]">
      <button className={`${pushButton} h-[21px] w-[73px]`}>
        <u>O</u>K
      </button>
      <button className={`${pushButton} ml-[17px] h-[21px] w-[73px]`}>
        <u>A</u>nnulla
      </button>
      <button disabled className="ml-[19px] h-[21px] w-[73px] border border-[#bfbfbf] bg-[#cccccc] text-[#838383]">
        App<u>l</u>ica
      </button>
      <button className={`${pushButton} ml-[17px] h-[21px] w-[73px]`}>
        <u>?</u>
      </button>
      <button aria-label="Comprimi finestra" className="ml-2">
        <svg width="23" height="23" viewBox="0 0 23 23" fill="none" aria-hidden="true">
          <circle cx="11.5" cy="11.5" r="10" fill="#e4edf6" stroke="#1f4e80" strokeWidth="2" />
          <path d="M14 6.5L9 11.5L14 16.5" stroke="#000" strokeWidth="3.5" />
        </svg>
      </button>
      <svg width="9" height="9" viewBox="0 0 9 9" fill="#bdbdbd" className="mr-[2px] ml-[9px] self-end" aria-hidden="true">
        <path d="M6 0H8V2H6ZM3 3H5V5H3ZM6 3H8V5H6ZM0 6H2V8H0ZM3 6H5V8H3ZM6 6H8V8H6Z" />
      </svg>
    </footer>
  </main>
);

export default App;
